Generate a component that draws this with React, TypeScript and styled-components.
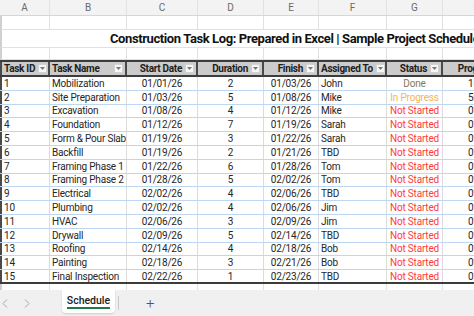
import React from 'react';
import styled, { createGlobalStyle } from 'styled-components';

const COLS = '50px 77px 71px 66px 55px 68px 56px 69px';
const FONT = 'Roboto, "Liberation Sans", sans-serif';

type Align = 'left' | 'center' | 'right';

const letters = ['A', 'B', 'C', 'D', 'E', 'F', 'G', 'H'];

const headers: { label: string; align: Align }[] = [
  { label: 'Task ID', align: 'left' },
  { label: 'Task Name', align: 'left' },
  { label: 'Start Date', align: 'right' },
  { label: 'Duration', align: 'right' },
  { label: 'Finish', align: 'right' },
  { label: 'Assigned To', align: 'left' },
  { label: 'Status', align: 'right' },
  { label: 'Progress', align: 'right' },
];

const tasks: [number, string, string, number, string, string, string, string][] = [
  [1, 'Mobilization', '01/01/26', 2, '01/03/26', 'John', 'Done', '100%'],
  [2, 'Site Preparation', '01/03/26', 5, '01/08/26', 'Mike', 'In Progress', '50%'],
  [3, 'Excavation', '01/08/26', 4, '01/12/26', 'Mike', 'Not Started', '0%'],
  [4, 'Foundation', '01/12/26', 7, '01/19/26', 'Sarah', 'Not Started', '0%'],
  [5, 'Form & Pour Slab', '01/19/26', 3, '01/22/26', 'Sarah', 'Not Started', '0%'],
  [6, 'Backfill', '01/19/26', 2, '01/21/26', 'TBD', 'Not Started', '0%'],
  [7, 'Framing Phase 1', '01/22/26', 6, '01/28/26', 'Tom', 'Not Started', '0%'],
  [8, 'Framing Phase 2', '01/28/26', 5, '02/02/26', 'Tom', 'Not Started', '0%'],
  [9, 'Electrical', '02/02/26', 4, '02/06/26', 'TBD', 'Not Started', '0%'],
  [10, 'Plumbing', '02/02/26', 4, '02/06/26', 'Jim', 'Not Started', '0%'],
  [11, 'HVAC', '02/06/26', 3, '02/09/26', 'Jim', 'Not Started', '0%'],
  [12, 'Drywall', '02/09/26', 5, '02/14/26', 'TBD', 'Not Started', '0%'],
  [13, 'Roofing', '02/14/26', 4, '02/18/26', 'Bob', 'Not Started', '0%'],
  [14, 'Painting', '02/18/26', 3, '02/21/26', 'Bob', 'Not Started', '0%'],
  [15, 'Final Inspection', '02/22/26', 1, '02/23/26', 'TBD', 'Not Started', '0%'],
];

const statusColor: Record<string, string> = {
  Done: '#7d7b5c',
  'In Progress': '#f4b64f',
  'Not Started': '#ff3b3b',
};

const GlobalStyle = createGlobalStyle`
  html, body { margin: 0; padding: 0; background: #fff; }
  * { box-sizing: border-box; }
`;

const Window = styled.div`
  width: 474px;
  height: 316px;
  overflow: hidden;
  display: flex;
  flex-direction: column;
  font-family: ${FONT};
  color: #262626;
  background: #fff;
`;

const Grid = styled.div`
  flex: 1;
  overflow: hidden;
  display: flex;
  flex-direction: column;
`;

const Row = styled.div<{ $h: number }>`
  display: grid;
  grid-template-columns: ${COLS};
  height: ${(p) => p.$h}px;
  flex-shrink: 0;
`;

const LetterRow = styled(Row)`
  background: #f3f3f3;
  border-bottom: 1px solid #d6d6d6;
`;

const Letter = styled.div`
  display: flex;
  align-items: center;
  justify-content: center;
  font-size: 10px;
  color: #6a6a6a;
  border-right: 1px solid #e2e2e2;
`;

const BlankCell = styled.div`
  border-right: 1px solid #e1e1e1;
  border-bottom: 1px solid #e1e1e1;
  &:first-child { border-left: 2px solid #d0d0d0; }
`;

const TitleRow = styled.div`
  height: 18px;
  flex-shrink: 0;
  display: flex;
  align-items: center;
  padding-left: 108px;
  white-space: nowrap;
  font-size: 13px;
  font-weight: 700;
  letter-spacing: -0.4px;
  color: #111;
  border-bottom: 1px solid #e1e1e1;
  border-left: 2px solid #d0d0d0;
`;

const HeaderRow = styled(Row)`
  background: #cbcbcb;
  border-top: 2px solid #3c3c3c;
  border-bottom: 2px solid #3c3c3c;
`;

const HeaderCell = styled.div<{ $align: Align }>`
  display: flex;
  align-items: center;
  justify-content: ${(p) => (p.$align === 'left' ? 'space-between' : 'flex-end')};
  gap: 3px;
  padding: 0 2px;
  font-size: 10px;
  font-weight: 700;
  letter-spacing: -0.3px;
  color: #1e1e1e;
  white-space: nowrap;
  border-right: 2px solid #4a4a4a;
  &:first-child { border-left: 2px solid #4a4a4a; }
`;

const FilterButton = styled.span`
  width: 9px;
  height: 9px;
  flex-shrink: 0;
  display: flex;
  align-items: center;
  justify-content: center;
  background: #f6f6f6;
  border: 1px solid #d2d2d2;
`;

const DataRow = styled(Row)<{ $last: boolean }>`
  border-bottom: ${(p) => (p.$last ? '2px solid #3c3c3c' : '1px solid #bcd7ef')};
`;

const Cell = styled.div<{ $align: Align; $color?: string; $pad?: number }>`
  display: flex;
  align-items: center;
  justify-content: ${(p) => (p.$align === 'left' ? 'flex-start' : p.$align === 'right' ? 'flex-end' : 'center')};
  padding: 0 2px 0 ${(p) => p.$pad ?? 2}px;
  font-size: 10px;
  letter-spacing: -0.2px;
  white-space: nowrap;
  overflow: hidden;
  color: ${(p) => p.$color ?? '#262626'};
  border-right: 1px solid #dcdcdc;
  &:first-child { border-left: 2px solid #4a4a4a; }
`;

const TabBar = styled.div`
  height: 26px;
  flex-shrink: 0;
  background: #f0f0f0;
  display: flex;
  align-items: center;
`;

const NavArrow = styled.span`
  width: 22px;
  display: flex;
  align-items: center;
  justify-content: center;
  margin-left: -6px;
  margin-right: 6px;
`;

const SheetTab = styled.div`
  margin-left: 18px;
  width: 53px;
  height: 23px;
  align-self: flex-start;
  background: #fff;
  border-radius: 0 0 4px 4px;
  box-shadow: 0 1px 2px rgba(0, 0, 0, 0.15);
  display: flex;
  align-items: center;
  justify-content: center;
  font-size: 10.5px;
  font-weight: 500;
  color: #222;
`;

const TabLabel = styled.span`
  border-bottom: 2px solid #1f7a45;
  line-height: 12px;
  padding-top: 1px;
`;

const Divider = styled.span`
  width: 1px;
  height: 14px;
  background: #c8c8c8;
  margin-left: 3px;
`;

const AddSheet = styled.span`
  margin-left: 27px;
  font-size: 15px;
  color: #555;
  font-weight: 300;
`;

const Caret = () => (
  <svg width="5" height="3" viewBox="0 0 5 3">
    <path d="M0 0h5L2.5 3z" fill="#777" />
  </svg>
);

const Chevron = ({ dir }: { dir: 'left' | 'right' }) => (
  <svg width="6" height="9" viewBox="0 0 6 9">
    <path
      d={dir === 'left' ? 'M5 0.5L1 4.5L5 8.5' : 'M1 0.5L5 4.5L1 8.5'}
      stroke="#a8a8a8"
      strokeWidth="1"
      fill="none"
    />
  </svg>
);

const blanks = letters.map((l) => <BlankCell key={l} />);

export default function App() {
  return (
    <Window>
      <GlobalStyle />
      <Grid>
        <LetterRow $h={16}>
          {letters.map((l) => (
            <Letter key={l}>{l}</Letter>
          ))}
        </LetterRow>
        <Row $h={14}>{blanks}</Row>
        <TitleRow>Construction Task Log: Prepared in Excel | Sample Project Schedule</TitleRow>
        <Row $h={12}>{blanks}</Row>
        <HeaderRow $h={17}>
          {headers.map((h) => (
            <HeaderCell key={h.label} $align={h.align}>
              <span>{h.label}</span>
              <FilterButton>
                <Caret />
              </FilterButton>
            </HeaderCell>
          ))}
        </HeaderRow>
        {tasks.map((t, i) => (
          <DataRow key={t[0]} $h={13.8} $last={i === tasks.length - 1}>
            <Cell $align="left">{t[0]}</Cell>
            <Cell $align="left">{t[1]}</Cell>
            <Cell $align="center">{t[2]}</Cell>
            <Cell $align="center">{t[3]}</Cell>
            <Cell $align="center">{t[4]}</Cell>
            <Cell $align="left">{t[5]}</Cell>
            <Cell $align="center" $color={statusColor[t[6]]}>{t[6]}</Cell>
            <Cell $align="left" $pad={25}>{t[7]}</Cell>
          </DataRow>
        ))}
        <Row $h={8}>{blanks}</Row>
      </Grid>
      <TabBar>
        <NavArrow>
          <Chevron dir="left" />
        </NavArrow>
        <NavArrow>
          <Chevron dir="right" />
        </NavArrow>
        <SheetTab>
          <TabLabel>Schedule</TabLabel>
        </SheetTab>
        <Divider />
        <AddSheet>+</AddSheet>
      </TabBar>
    </Window>
  );
}
